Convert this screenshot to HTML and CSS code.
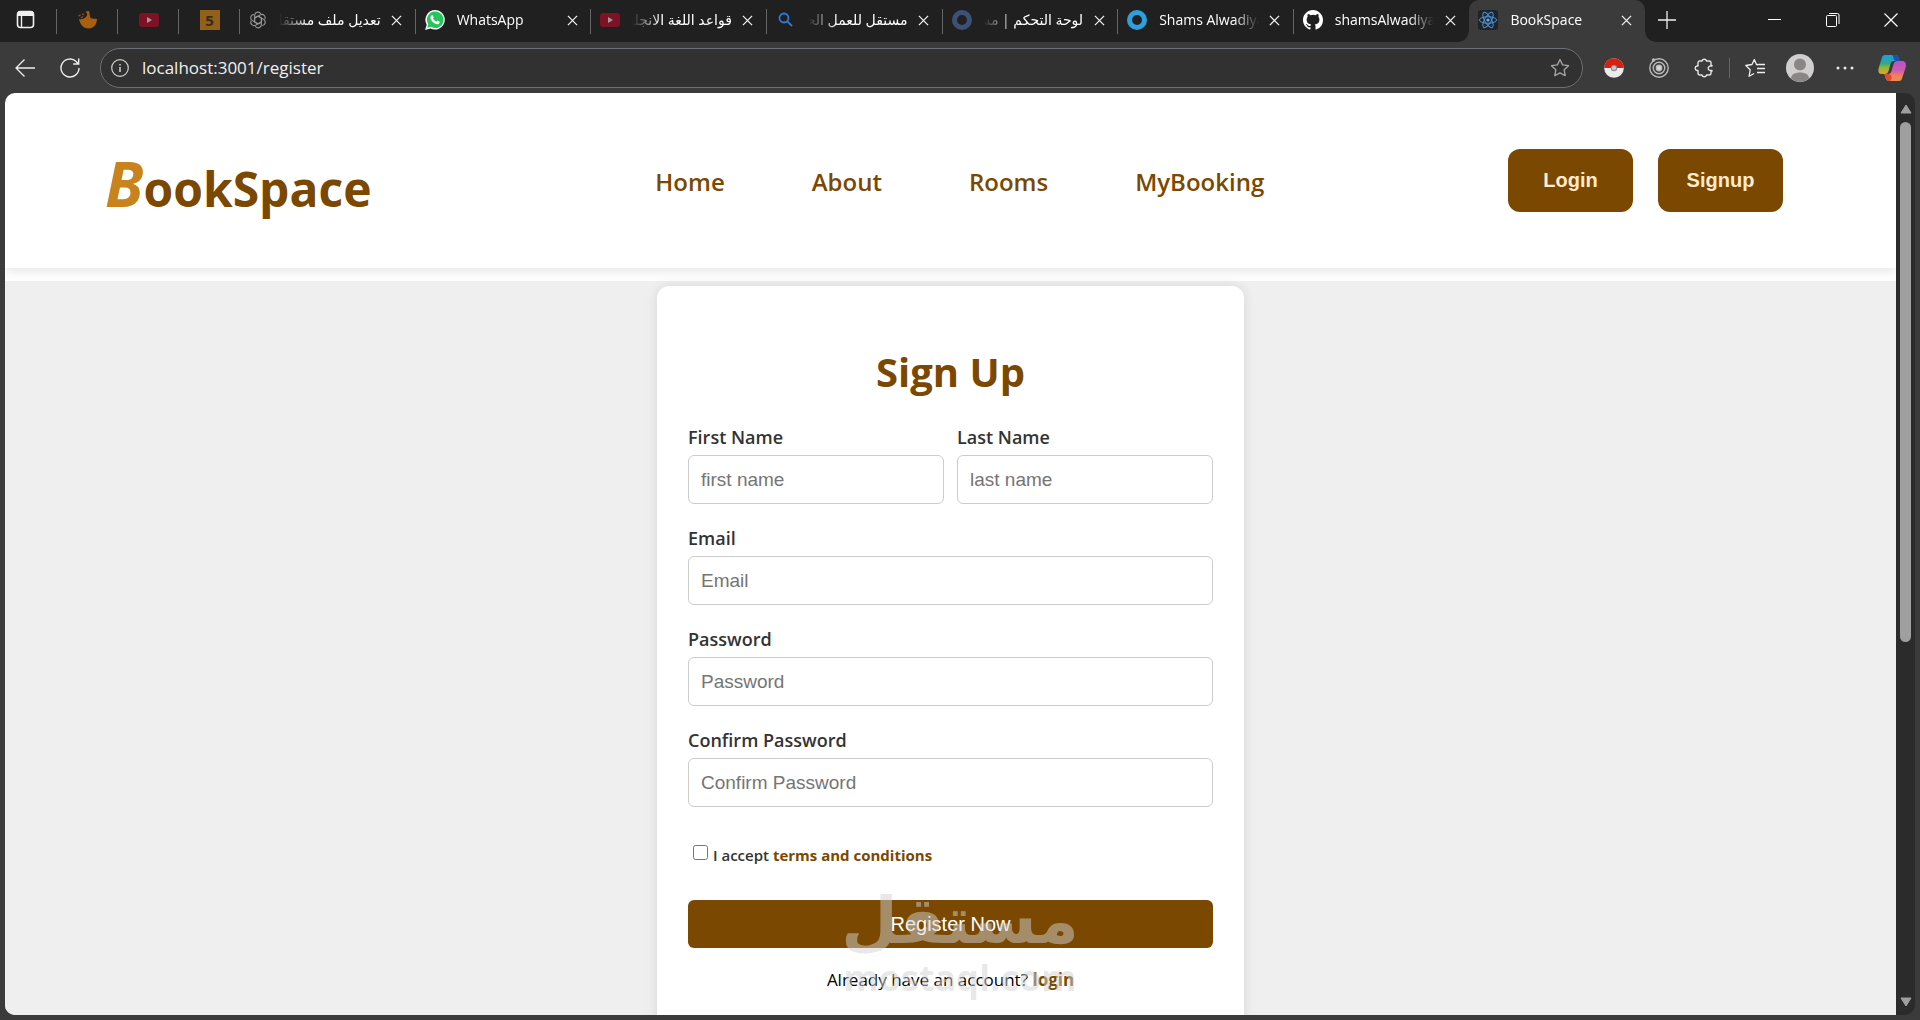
FILE: index.html
```html
<!DOCTYPE html>
<html lang="en">
<head>
    <meta charset="UTF-8">
    <meta name="viewport" content="width=device-width, initial-scale=1.0">
    <title>BookSpace</title>
    <link rel="stylesheet" href="styles.css">
</head>
<body>
    <!-- shared icons -->
    <svg class="sprite" aria-hidden="true">
        <symbol id="close" viewBox="0 0 12 12"><path d="M1 1l10 10M11 1L1 11" fill="none" stroke="#f2f2f2" stroke-width="1.4"/></symbol>
        <symbol id="youtube" viewBox="0 0 20 20"><rect y="3" width="20" height="14" rx="3" fill="#7d1224"/><path d="M8 7l5 3-5 3z" fill="#a09a9c"/></symbol>
        <symbol id="star" viewBox="0 0 20 20"><path d="M10 1.500l2.600 5.400 5.900.8-4.300 4.100 1 5.900L10 14.900l-5.200 2.800 1-5.900L1.500 7.700l5.900-.8z" fill="none" stroke="currentColor" stroke-width="1.3" stroke-linejoin="round"/></symbol>
    </svg>

    <div class="tab-strip">
        <button class="pinned first" aria-label="Tab actions">
            <svg width="20" height="20" viewBox="0 0 20 20"><rect x="1.500" y="1.500" width="16" height="16" rx="3" fill="none" stroke="#f0f0f0" stroke-width="1.600"/><path d="M1.500 6V4a3 3 0 0 1 3-3h10a3 3 0 0 1 3 3v2z" fill="#f0f0f0"/><path d="M5.500 6v11" stroke="#f0f0f0" stroke-width="1.400"/></svg>
        </button>
        <button class="pinned" aria-label="Pinned tab">
            <svg width="20" height="20" viewBox="0 0 20 20"><path d="M1 9c2 1 3 0 5-.5C7 8 8 7 9 5.500 9.500 4 9 3 7.500 1.500L10.500 1l1 1c0 2 0 4 1 6 2 .8 4 .8 6.500 1-.2 5.500-3.500 9.500-8.500 9.500S2 14.500 1 9z" fill="#a8600f"/><path d="M.5 6l2-1M3 8l2-1.500M4 4l2 .5" stroke="#8a4a12" stroke-width="1.500"/></svg>
        </button>
        <button class="pinned" aria-label="YouTube">
            <svg width="20" height="20"><use href="#youtube"/></svg>
        </button>
        <button class="pinned" aria-label="Pinned tab 5"><span class="five">5</span></button>

        <div class="tabs">
            <div class="tab rtl">
                <svg width="18" height="20" viewBox="0 0 20 20" fill="none" stroke="#9a9a9a" stroke-width="1.200"><g id="knot"><path d="M10 5.500L6.300 7.600v4.300M6.300 7.600V5a3.700 3.700 0 0 1 6.800-2"/></g><use href="#knot" transform="rotate(60 10 10)"/><use href="#knot" transform="rotate(120 10 10)"/><use href="#knot" transform="rotate(180 10 10)"/><use href="#knot" transform="rotate(240 10 10)"/><use href="#knot" transform="rotate(300 10 10)"/></svg>
                <span class="tab-title" dir="rtl">تعديل ملف مستقل</span>
                <button class="tab-close" aria-label="Close"><svg width="11" height="11"><use href="#close"/></svg></button>
            </div>
            <div class="tab">
                <svg width="20" height="20" viewBox="0 0 20 20"><path d="M10.200 0A9.800 9.800 0 0 0 1.700 14.700L0 20l5.500-1.500A9.800 9.800 0 1 0 10.200 0z" fill="#f4f4f4"/><path d="M10.200 1.600a8.200 8.200 0 0 0-6.900 12.600l-1 3.500 3.600-1a8.200 8.200 0 1 0 4.300-15.100z" fill="#25c45c"/><path d="M6.800 5.200h.9l1 2.200-.8 1.200c.8 1.500 1.800 2.400 3.500 3.200l1.100-1.200 2.200 1.100c0 1.800-1.200 2.600-2.500 2.600-3.300-.5-6.200-3.500-6.800-6.200 0-1.200.5-2.300 1.400-2.900z" fill="#fff"/></svg>
                <span class="tab-title">WhatsApp</span>
                <button class="tab-close" aria-label="Close"><svg width="11" height="11"><use href="#close"/></svg></button>
            </div>
            <div class="tab rtl">
                <svg width="20" height="20"><use href="#youtube"/></svg>
                <span class="tab-title" dir="rtl">قواعد اللغة الانجليزية</span>
                <button class="tab-close" aria-label="Close"><svg width="11" height="11"><use href="#close"/></svg></button>
            </div>
            <div class="tab rtl">
                <svg width="20" height="20" viewBox="0 0 20 20" fill="none" stroke="#2f7bdb" stroke-width="1.800"><circle cx="8" cy="8" r="4.500"/><path d="M11.300 11.300l4.700 4.700"/></svg>
                <span class="tab-title" dir="rtl">مستقل للعمل الحر</span>
                <button class="tab-close" aria-label="Close"><svg width="11" height="11"><use href="#close"/></svg></button>
            </div>
            <div class="tab rtl">
                <svg width="20" height="20" viewBox="0 0 20 20"><circle cx="10" cy="10" r="7.500" fill="none" stroke="#3d5176" stroke-width="5"/></svg>
                <span class="tab-title" dir="rtl">لوحة التحكم | مستقل</span>
                <button class="tab-close" aria-label="Close"><svg width="11" height="11"><use href="#close"/></svg></button>
            </div>
            <div class="tab">
                <svg width="20" height="20" viewBox="0 0 20 20"><circle cx="10" cy="10" r="7.500" fill="none" stroke="#2e9fdc" stroke-width="5"/></svg>
                <span class="tab-title">Shams Alwadiya</span>
                <button class="tab-close" aria-label="Close"><svg width="11" height="11"><use href="#close"/></svg></button>
            </div>
            <div class="tab">
                <svg width="20" height="20" viewBox="0 0 16 16"><path fill="#fff" d="M8 0C3.580 0 0 3.580 0 8c0 3.540 2.290 6.530 5.470 7.590.4.070.55-.17.55-.38 0-.19-.01-.82-.01-1.490-2.010.37-2.530-.49-2.690-.94-.09-.23-.48-.94-.82-1.130-.28-.15-.68-.52-.01-.53.63-.01 1.080.58 1.230.82.72 1.210 1.870.87 2.330.66.070-.52.280-.87.510-1.070-1.780-.2-3.640-.89-3.640-3.950 0-.87.310-1.590.82-2.150-.08-.2-.36-1.020.08-2.120 0 0 .67-.21 2.200.82a7.600 7.600 0 0 1 4 0c1.530-1.040 2.200-.82 2.200-.82.44 1.100.16 1.920.08 2.120.51.56.82 1.270.82 2.150 0 3.070-1.870 3.750-3.650 3.950.29.25.54.73.54 1.480 0 1.070-.01 1.930-.01 2.200 0 .21.15.46.55.38A8 8 0 0 0 16 8c0-4.420-3.580-8-8-8z"/></svg>
                <span class="tab-title">shamsAlwadiya</span>
                <button class="tab-close" aria-label="Close"><svg width="11" height="11"><use href="#close"/></svg></button>
            </div>
            <div class="tab active">
                <svg width="20" height="20" viewBox="0 0 20 20"><rect width="20" height="20" rx="3" fill="#20232a"/><circle cx="10" cy="10" r="1.600" fill="#63b4f0"/><g fill="none" stroke="#4b95d8" stroke-width="1"><ellipse cx="10" cy="10" rx="8.600" ry="3.300"/><ellipse cx="10" cy="10" rx="8.600" ry="3.300" transform="rotate(60 10 10)"/><ellipse cx="10" cy="10" rx="8.600" ry="3.300" transform="rotate(120 10 10)"/></g></svg>
                <span class="tab-title">BookSpace</span>
                <button class="tab-close" aria-label="Close"><svg width="11" height="11"><use href="#close"/></svg></button>
            </div>
        </div>

        <div class="window-controls">
            <button class="new-tab" aria-label="New tab"><svg width="18" height="18" viewBox="0 0 18 18"><path d="M9 0v18M0 9h18" stroke="#f0f0f0" stroke-width="1.300"/></svg></button>
            <button aria-label="Minimize"><svg width="14" height="14" viewBox="0 0 14 14"><path d="M0 6.500h13" stroke="#fff"/></svg></button>
            <button aria-label="Restore"><svg width="14" height="14" viewBox="0 0 14 14" fill="none" stroke="#fff"><rect x=".5" y="2.500" width="10" height="11" rx="1"/><path d="M3 .5h8.500a1.500 1.500 0 0 1 1.500 1.500v9"/></svg></button>
            <button aria-label="Close window"><svg width="14" height="14" viewBox="0 0 14 14"><path d="M.5.500l13 13M13.500.500l-13 13" stroke="#fff" stroke-width="1.200"/></svg></button>
        </div>
    </div>

    <div class="toolbar">
        <button class="tool" aria-label="Back"><svg width="20" height="20" viewBox="0 0 20 20" fill="none" stroke="#eee" stroke-width="1.300"><path d="M20 10H1M9.500 1.500L1 10l8.500 8.500"/></svg></button>
        <button class="tool" aria-label="Reload"><svg width="20" height="20" viewBox="0 0 20 20" fill="none" stroke="#eee" stroke-width="1.400"><path d="M19 10a9 9 0 1 1-2.800-6.500L18.500 6M18.700.5V6h-5.500"/></svg></button>
        <div class="address">
            <svg width="18" height="18" viewBox="0 0 18 18" fill="none" stroke="#d0d0d0" stroke-width="1.200"><circle cx="9" cy="9" r="8.300"/><path d="M9 8v5M9 5v1.500" stroke-width="1.500"/></svg>
            <input class="url" type="text" aria-label="Address" value="localhost:3001/register">
            <svg class="fav" width="20" height="20"><use href="#star"/></svg>
        </div>
        <div class="extensions">
            <button class="tool" aria-label="Pokeball"><svg width="20" height="20" viewBox="0 0 20 20"><circle cx="10" cy="10" r="9.800" fill="#ececec"/><path d="M.2 10a9.800 9.800 0 0 1 19.600 0z" fill="#d81f10"/><circle cx="10" cy="10" r="3.200" fill="#888"/><circle cx="10" cy="10" r="2.200" fill="#c6c6c6"/></svg></button>
            <button class="tool" aria-label="Extension"><svg width="20" height="20" viewBox="0 0 20 20" fill="none" stroke="#b9b9b9" stroke-width="1.400"><circle cx="10" cy="10" r="9.200"/><circle cx="10" cy="10" r="5.800"/><circle cx="10" cy="10" r="2.700" fill="#d8d8d8"/><circle cx="4.500" cy="2" r="1" fill="#b9b9b9"/></svg></button>
            <button class="tool" aria-label="Extensions"><svg width="20" height="20" viewBox="0 0 20 20" fill="none" stroke="#e4e4e4" stroke-width="1.400" stroke-linejoin="round"><path d="M5 3h3a2.300 2.300 0 0 1 4.500 0H15a2 2 0 0 1 2 2v2.500h1V8h-1a2.300 2.300 0 1 0 0 4.500h1V13l-1 .2V15a2 2 0 0 1-2 2h-2.500a2.300 2.300 0 0 1-4.500 0H6a2 2 0 0 1-2-2v-2.500H3a2.300 2.300 0 0 1 0-4.500h1V5a2 2 0 0 1 1-2z"/></svg></button>
        </div>
        <div class="profile">
            <button class="tool" aria-label="Favorites"><svg width="20" height="20" viewBox="0 0 20 20" fill="none" stroke="#eee" stroke-width="1.300" stroke-linejoin="round"><path d="M13 6.800l-1.500-.3L9.300 1.500 7 6.500.8 7.500l4.400 4.300-1.100 6.500 5-2.800M12.500 6.500H20M12 10.500h8M12 14.500h8"/></svg></button>
            <button class="tool" aria-label="Profile"><svg width="28" height="28" viewBox="0 0 28 28"><circle cx="14" cy="14" r="14" fill="#d0cece"/><circle cx="14" cy="10.500" r="6" fill="#8b8686"/><path d="M5 24.500c0-4 4-6 9-6s9 2 9 6a14 14 0 0 1-18 0z" fill="#8b8686"/></svg></button>
            <button class="tool" aria-label="Settings"><svg width="18" height="4" viewBox="0 0 18 4" fill="#e8e8e8"><circle cx="2" cy="2" r="1.500"/><circle cx="9" cy="2" r="1.500"/><circle cx="16" cy="2" r="1.500"/></svg></button>
            <button class="tool" aria-label="Copilot"><svg width="28" height="26" viewBox="0 0 28 26">
                <defs>
                    <linearGradient id="copA" x1="0" y1="0" x2="0" y2="1"><stop offset="0" stop-color="#219de0"/><stop offset=".45" stop-color="#2fa98c"/><stop offset=".65" stop-color="#8fb832"/><stop offset="1" stop-color="#e8a21c"/></linearGradient>
                    <linearGradient id="copB" x1="0" y1="0" x2="0" y2="1"><stop offset="0" stop-color="#b455cf"/><stop offset=".45" stop-color="#d058b4"/><stop offset=".75" stop-color="#f0845a"/><stop offset="1" stop-color="#f28a4a"/></linearGradient>
                </defs>
                <path d="M7 0h10c3 0 3.500 2 4.500 6H16c-2 0-3 1-3.500 3l-2 7c-.6 2-1.500 3-3.500 3H3.500C0 19 0 15.500 1 12L3.500 4C4.200 1.500 5 0 7 0z" fill="url(#copA)"/>
                <path d="M15 0h2c3 0 3.500 2 4.500 6H18c-2.500 0-2.500-5-4-6z" fill="#1b4fb3"/>
                <path d="M21 26H11c-3 0-3.500-3-4.500-7H10c2 0 3-1 3.500-3l2-6.500c.8-2.500 1.500-3.500 4-3.500H24c4 0 4.500 3.500 3.500 7l-3 9C23.800 24.500 23 26 21 26z" fill="url(#copB)"/>
                <path d="M6.500 19H10c2 0 3 1 3.500 2.500S13 25 12 26h-1c-3 0-3.500-3-4.500-7z" fill="#e24a2c"/>
            </svg></button>
        </div>
    </div>

    <div class="viewport">
        <div class="page">
            <header class="header">
                <h1 class="logo"><span>B</span>ookSpace</h1>
                <nav>
                    <ul>
                        <li><a href="#">Home</a></li>
                        <li><a href="#">About</a></li>
                        <li><a href="#">Rooms</a></li>
                        <li><a href="#">MyBooking</a></li>
                    </ul>
                </nav>
                <div class="header-buttons">
                    <button>Login</button>
                    <button>Signup</button>
                </div>
            </header>

            <main class="register">
                <form class="card">
                    <h2>Sign Up</h2>
                    <div class="row">
                        <div class="field">
                            <label for="firstName">First Name</label>
                            <input type="text" id="firstName" placeholder="first name">
                        </div>
                        <div class="field">
                            <label for="lastName">Last Name</label>
                            <input type="text" id="lastName" placeholder="last name">
                        </div>
                    </div>
                    <div class="field">
                        <label for="email">Email</label>
                        <input type="email" id="email" placeholder="Email">
                    </div>
                    <div class="field">
                        <label for="password">Password</label>
                        <input type="password" id="password" placeholder="Password">
                    </div>
                    <div class="field">
                        <label for="confirm">Confirm Password</label>
                        <input type="password" id="confirm" placeholder="Confirm Password">
                    </div>
                    <div class="terms">
                        <input type="checkbox" id="terms">
                        <label for="terms">I accept <a href="#">terms and conditions</a></label>
                    </div>
                    <div class="submit">
                        <button type="submit">Register Now</button>
                        <div class="watermark" aria-hidden="true">
                            <span class="mark-ar" dir="rtl">مستقل</span>
                            <span class="mark-en">mostaql.com</span>
                        </div>
                    </div>
                    <p class="have-account">Already have an account? <a href="#">login</a></p>
                </form>
            </main>
        </div>
        <div class="scrollbar">
            <svg width="12" height="10" viewBox="0 0 12 10"><path d="M6 1l5 8H1z" fill="#9f9f9f" stroke="#9f9f9f" stroke-linejoin="round"/></svg>
            <div class="track"><div class="thumb"></div></div>
            <svg width="12" height="10" viewBox="0 0 12 10"><path d="M6 9l5-8H1z" fill="#9f9f9f" stroke="#9f9f9f" stroke-linejoin="round"/></svg>
        </div>
    </div>
</body>
</html>
```
FILE: styles.css
```css
* {
    margin: 0;
    padding: 0;
    box-sizing: border-box;
}

body {
    display: flex;
    flex-direction: column;
    height: 100vh;
    overflow: hidden;
    background-color: #3b3b3b;
    font-family: "Segoe UI", "Open Sans", "DejaVu Sans", sans-serif;
}

button {
    border: none;
    background: none;
    cursor: pointer;
}

a {
    color: #7a4800;
    text-decoration: none;
}

svg {
    display: block;
    flex-shrink: 0;
}

.sprite {
    position: absolute;
    width: 0;
    height: 0;
}

/* tabs */
.tab-strip {
    display: flex;
    height: 42px;
    background-color: #202020;
}

.pinned {
    position: relative;
    display: flex;
    align-items: center;
    justify-content: center;
    width: 61px;
    height: 40px;
    flex-shrink: 0;
}

.pinned.first {
    width: 57px;
    padding-right: 6px;
}

.pinned::after,
.tab::after {
    content: "";
    position: absolute;
    right: 0;
    top: 9px;
    width: 1px;
    height: 25px;
    background-color: #666;
}

.five {
    width: 20px;
    height: 20px;
    background-color: #91601a;
    color: #3a2b18;
    font: bold 15px/20px "Open Sans", sans-serif;
}

.tabs {
    display: flex;
    flex: 1;
    min-width: 0;
}

.tab {
    position: relative;
    display: flex;
    align-items: center;
    flex: 1;
    min-width: 0;
    height: 42px;
    padding: 0 9px 2px 9px;
}

.tab.active {
    background-color: #3b3b3b;
    border-radius: 10px 10px 0 0;
}

/* flared feet of the active tab */
.tab.active::before,
.tab.active::after {
    content: "";
    position: absolute;
    top: auto;
    bottom: 0;
    width: 10px;
    height: 10px;
}

.tab.active::before {
    left: -10px;
    background: radial-gradient(circle at 0 0, #202020 9px, #3b3b3b 10px);
}

.tab.active::after {
    right: -10px;
    background: radial-gradient(circle at 100% 0, #202020 9px, #3b3b3b 10px);
}

.tab:nth-last-child(2)::after {
    display: none;
}

.tab-title {
    flex: 1;
    min-width: 0;
    margin: 0 6px 0 12px;
    overflow: hidden;
    white-space: nowrap;
    color: #fff;
    font-size: 14px;
    line-height: 24px;
    -webkit-mask-image: linear-gradient(to right, #000 75%, transparent);
    mask-image: linear-gradient(to right, #000 75%, transparent);
}

.rtl .tab-title {
    -webkit-mask-image: linear-gradient(to left, #000 70%, transparent);
    mask-image: linear-gradient(to left, #000 70%, transparent);
}

.tab-close {
    display: flex;
    align-items: center;
    justify-content: center;
    width: 20px;
    height: 20px;
}

.window-controls {
    display: flex;
    width: 275px;
    height: 40px;
}

.window-controls button {
    display: flex;
    align-items: center;
    justify-content: center;
    width: 58px;
}

.window-controls .new-tab {
    width: 44px;
    margin-right: 57px;
}

/* toolbar */
.toolbar {
    display: flex;
    align-items: center;
    height: 51px;
    padding: 0 3px 0 2px;
}

.tool {
    display: flex;
    align-items: center;
    justify-content: center;
    width: 45px;
    height: 40px;
}

.address {
    display: flex;
    align-items: center;
    flex: 1;
    height: 40px;
    margin-left: 8px;
    padding: 0 12px 0 10px;
    border: 1px solid #6c7075;
    border-radius: 20px;
    background-color: #313131;
}

.url {
    flex: 1;
    margin-left: 13px;
    border: none;
    outline: none;
    background: none;
    color: #f0f0f0;
    font: 17px/24px "Segoe UI", "Open Sans", sans-serif;
}

.fav {
    color: #a8a8a8;
}

.extensions {
    display: flex;
    padding: 0 3px 0 8px;
}

.profile {
    display: flex;
    position: relative;
    padding-left: 3px;
}

.profile::before {
    content: "";
    position: absolute;
    left: 0;
    top: 10px;
    width: 1px;
    height: 20px;
    background-color: #62666a;
}

.profile .tool:last-child {
    width: 50px;
}

/* page area */
.viewport {
    display: flex;
    flex: 1;
    min-height: 0;
    margin: 0 5px 5px;
    border-radius: 10px;
    overflow: hidden;
    background-color: #2b2b2b;
}

.page {
    flex: 1;
    overflow: hidden;
    background-color: #fff;
}

.header {
    display: flex;
    align-items: center;
    justify-content: space-between;
    height: 175px;
    margin-bottom: 13px;
    padding: 0 113px 0 100px;
    box-shadow: 0 2px 12px rgba(0, 0, 0, 0.12);
}

.logo {
    padding-top: 10px;
    color: #7a4800;
    font-size: 48px;
    font-weight: 700;
    line-height: 80px;
}

.logo span {
    color: #c9831c;
    font-size: 62px;
    font-style: italic;
}

nav ul {
    display: flex;
    gap: 87px;
    padding: 2px 0 0 40px;
    list-style-type: none;
}

nav a {
    font-size: 24px;
    font-weight: 600;
    line-height: 32px;
}

.header-buttons {
    display: flex;
    gap: 25px;
}

.header-buttons button {
    width: 125px;
    height: 63px;
    border-radius: 12px;
    background-color: #7a4800;
    color: #ffebcd;
    font: bold 20px "Liberation Sans", Arial, sans-serif;
}

/* register form */
.register {
    display: flex;
    justify-content: center;
    padding-top: 5px;
    background-color: #efefef;
}

.card {
    width: 587px;
    padding: 60px 31px 40px;
    border-radius: 12px;
    background-color: #fff;
    box-shadow: 0 0 12px rgba(0, 0, 0, 0.1);
}

.card h2 {
    margin-bottom: 26px;
    color: #7a4800;
    font-size: 40px;
    font-weight: 700;
    line-height: 52px;
    text-align: center;
}

.row {
    display: flex;
    gap: 13px;
}

.field {
    flex: 1;
    margin-bottom: 21px;
}

.field label {
    display: block;
    margin-bottom: 5px;
    color: #333;
    font-size: 18px;
    font-weight: 600;
    line-height: 26px;
}

.field input {
    display: block;
    width: 100%;
    height: 49px;
    padding: 0 12px;
    border: 1px solid #ccc;
    border-radius: 6px;
    font: 19px "Liberation Sans", Arial, sans-serif;
}

.field input::placeholder {
    color: #757575;
}

.terms {
    display: flex;
    align-items: center;
    margin: 36px 0 33px;
    padding-left: 5px;
    color: #333;
    font-size: 15px;
    font-weight: 600;
    line-height: 24px;
}

.terms input {
    width: 15px;
    height: 15px;
    margin: 0 5px 6px 0;
}

.terms a,
.have-account a {
    font-weight: 700;
}

.submit {
    position: relative;
}

.submit button {
    width: 100%;
    height: 48px;
    border-radius: 6px;
    background-color: #7a4800;
    color: #fff;
    font: 20px "Liberation Sans", Arial, sans-serif;
}

.watermark {
    position: absolute;
    left: 157px;
    top: -14px;
    display: flex;
    flex-direction: column;
    align-items: center;
    width: 230px;
    color: #d2d2d2;
    font-weight: 700;
    opacity: 0.5;
    pointer-events: none;
}

.mark-ar {
    font: bold 65px/70px "DejaVu Sans", sans-serif;
}

.mark-en {
    font-size: 36px;
    line-height: 44px;
}

.have-account {
    margin-top: 19px;
    font-size: 17px;
    line-height: 26px;
    text-align: center;
}

/* scrollbar */
.scrollbar {
    display: flex;
    flex-direction: column;
    align-items: center;
    width: 19px;
    padding: 11px 0 8px;
}

.track {
    flex: 1;
    width: 11px;
    padding: 8px 0;
}

.thumb {
    height: 60%;
    border-radius: 6px;
    background-color: #9f9f9f;
}
```
